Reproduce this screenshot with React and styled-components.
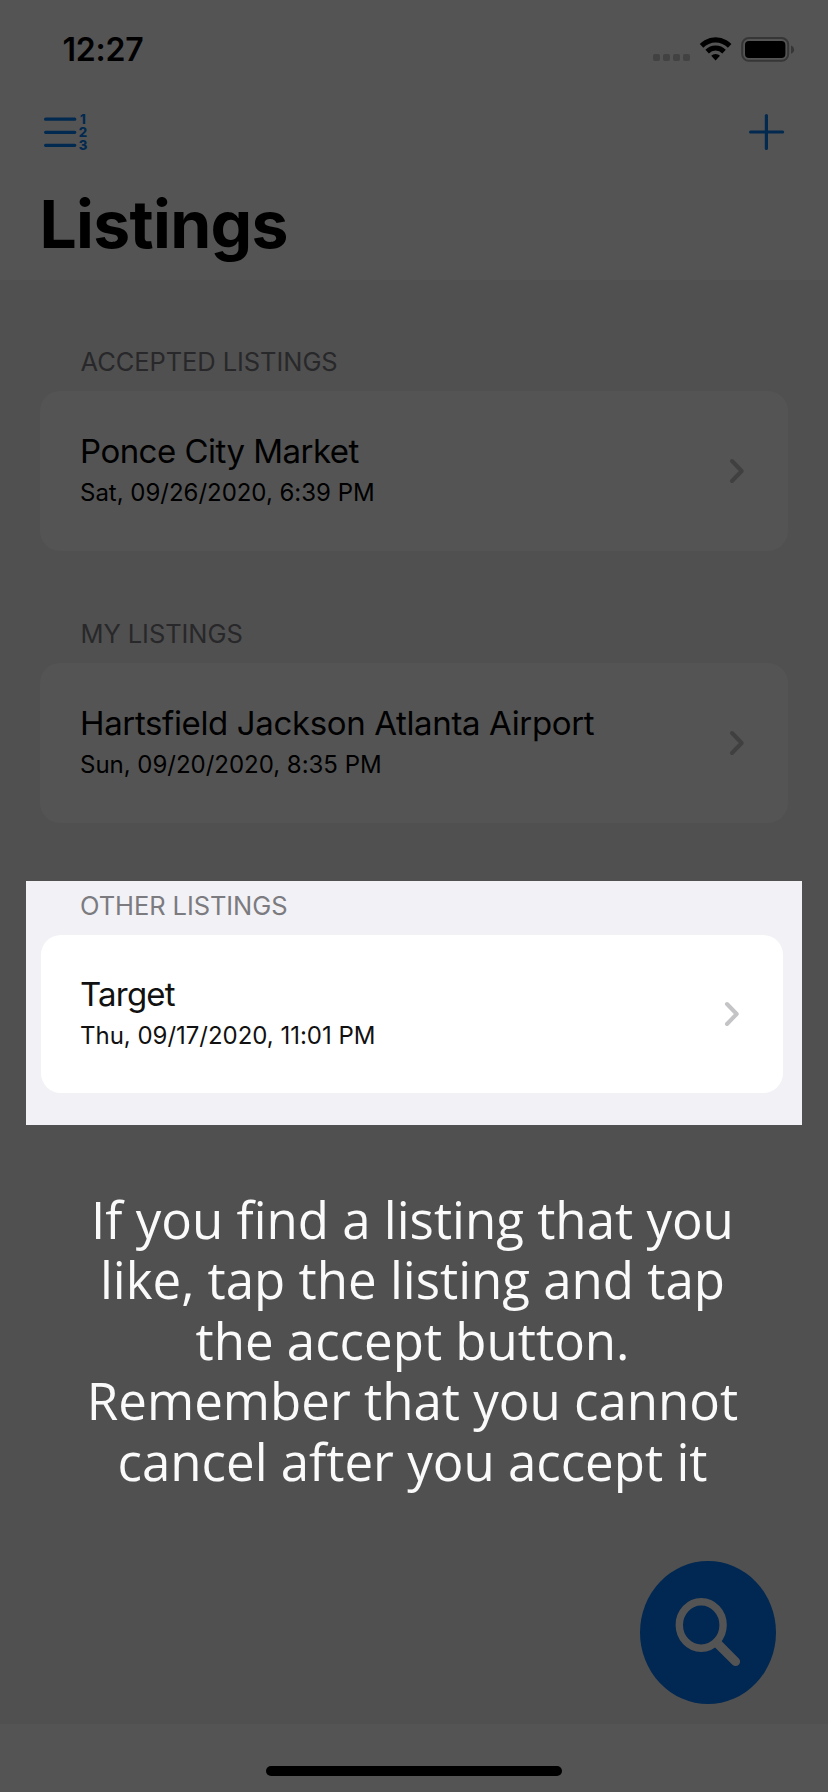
import React from "react";
import styled, { createGlobalStyle, css } from "styled-components";

const c = {
  surface: "#545454",
  canvas: "#505050",
  link: "#02294f",
  fab: "#002852",
  label: "#28282a",
};

const GlobalStyle = createGlobalStyle`
  * { box-sizing: border-box; }
  body { margin: 0; background: ${c.canvas}; }
`;

const Screen = styled.div`
  position: relative;
  display: flex;
  flex-direction: column;
  width: 828px;
  height: 1792px;
  overflow: hidden;
  background: ${c.canvas};
  color: #000;
  font-family: Inter, "Liberation Sans", sans-serif;
`;

const Header = styled.header`
  display: flex;
  flex-direction: column;
  flex: none;
  height: 280px;
  background: ${c.surface};
`;

const StatusBar = styled.div`
  display: flex;
  justify-content: space-between;
  align-items: flex-start;
  height: 96px;
  padding: 30px 33px 0 62.5px;
`;

const Clock = styled.span`
  font-size: 32px;
  font-weight: 600;
  line-height: 40px;
  letter-spacing: -0.2px;
`;

const StatusIcons = styled.svg`
  display: block;
  margin-top: 6px;
`;

const Toolbar = styled.div`
  display: flex;
  justify-content: space-between;
  align-items: center;
  height: 72px;
  padding: 0 43px;
`;

const ToolButton = styled.button`
  display: flex;
  padding: 0;
  border: 0;
  background: none;
  color: ${c.link};
`;

const Title = styled.h1`
  margin: 16px 0 0 39.5px;
  font-size: 66px;
  font-weight: 700;
  line-height: 80px;
  letter-spacing: -0.7px;
`;

const Content = styled.main`
  display: flex;
  flex-direction: column;
  flex: 1;
  padding-top: 66px;
`;

const Section = styled.section`
  display: flex;
  flex-direction: column;
  gap: 13px;
  margin-bottom: 67px;
  padding: 0 40px;

  ${(p) =>
    p.$highlighted &&
    css`
      height: 244px;
      margin: -9px 26px 0;
      padding: 9px 19px 0 15px;
      background: #f2f1f6;
    `}
`;

const SectionLabel = styled.h2`
  margin: 0;
  padding-left: ${(p) => (p.$highlighted ? 39 : 40.5)}px;
  font-size: 25.5px;
  font-weight: 400;
  line-height: 32px;
  letter-spacing: -0.08px;
  color: ${(p) => (p.$highlighted ? "#7b7b80" : c.label)};
`;

const Card = styled.div`
  display: flex;
  justify-content: space-between;
  align-items: center;
  height: ${(p) => (p.$highlighted ? 158 : 160)}px;
  padding: 0 43px 0 ${(p) => (p.$highlighted ? 39 : 40)}px;
  border-radius: 20px;
  background: ${(p) => (p.$highlighted ? "#fff" : c.surface)};
  color: ${(p) => (p.$highlighted ? "#111" : "#000")};
`;

const CardText = styled.div`
  display: flex;
  flex-direction: column;
  gap: 6px;
  margin-bottom: 2px;
`;

const Place = styled.span`
  font-size: 33px;
  line-height: 40px;
  letter-spacing: ${(p) => p.$tracking}px;
`;

const When = styled.span`
  font-size: 24px;
  line-height: 32px;
  letter-spacing: -0.02px;
`;

const Chevron = styled.svg`
  display: block;
  color: ${(p) => (p.$highlighted ? "#c4c4c6" : "#404040")};
`;

const Message = styled.p`
  display: flex;
  flex-direction: column;
  align-items: center;
  margin: 64px 3px 0 0;
  font-family: "Open Sans", "Noto Sans", sans-serif;
  font-size: 51px;
  line-height: 60.4px;
  color: #fafafa;
`;

const MessageLine = styled.span`
  white-space: nowrap;
`;

const SearchButton = styled.button`
  position: absolute;
  right: 52px;
  bottom: 88px;
  width: 136px;
  height: 143px;
  padding: 0;
  border: 0;
  border-radius: 50%;
  background: ${c.fab};
  color: ${c.surface};
`;

const Footer = styled.footer`
  display: flex;
  justify-content: center;
  align-items: flex-end;
  flex: none;
  height: 68px;
  padding-bottom: 16px;
  background: ${c.surface};
`;

const HomeIndicator = styled.div`
  width: 296px;
  height: 10px;
  border-radius: 5px;
  background: #000;
`;

const SystemIcons = () => (
  <StatusIcons width="142" height="27" viewBox="0 0 142 27">
    <g fill="#424242">
      {[0, 10, 20, 30].map((x) => (
        <rect key={x} x={x} y="18" width="7" height="7" rx="2" />
      ))}
    </g>
    <path d="M51.6 4.3a21.2 21.2 0 0 1 22 0 22 22 0 0 1 4.8 3.8l-3.5 3.6a17.3 17.3 0 0 0-24.6 0L46.8 8.1a22 22 0 0 1 4.8-3.8z" />
    <path d="M52.4 13.8a14.4 14.4 0 0 1 20.4 0l-3.5 3.6a9.4 9.4 0 0 0-13.4 0z" />
    <path d="M58.2 19.8a6.2 6.2 0 0 1 8.8 0L62.6 24.4z" />
    <rect x="89.2" y="2" width="46" height="22.8" rx="6.6" fill="none" stroke="#363636" strokeWidth="2" />
    <rect x="92" y="5" width="40.4" height="17" rx="4" />
    <path d="M138 9.6c4.2 1.8 4.2 6.4 0 8.2z" fill="#363636" />
  </StatusIcons>
);

const NumberedListIcon = () => (
  <svg width="48" height="40" viewBox="0 0 48 40">
    <path d="M2.6 7.2h29.2M2.6 20.3h29.2M2.6 33.3h29.2" stroke="currentColor" strokeWidth="3.2" strokeLinecap="round" />
    <g fill="currentColor" fontFamily="Inter" fontWeight="800" fontSize="13.2" textAnchor="middle">
      <text x="40" y="11.7">1</text>
      <text x="40" y="24.8">2</text>
      <text x="40" y="37.8">3</text>
    </g>
  </svg>
);

const PlusIcon = () => (
  <svg width="36" height="36" viewBox="0 0 36 36">
    <path d="M17.4 1.6v32.8M1.6 18h32" stroke="currentColor" strokeWidth="3.2" strokeLinecap="round" />
  </svg>
);

const SearchIcon = () => (
  <svg width="136" height="143" viewBox="0 0 136 143" fill="none" stroke="currentColor">
    <ellipse cx="61.2" cy="64" rx="21.9" ry="23.2" strokeWidth="7.4" />
    <path d="M77.5 82.5L95.6 100.6" strokeWidth="9" strokeLinecap="round" />
  </svg>
);

const listings = [
  { label: "ACCEPTED LISTINGS", place: "Ponce City Market", when: "Sat, 09/26/2020, 6:39 PM", tracking: -0.52 },
  { label: "MY LISTINGS", place: "Hartsfield Jackson Atlanta Airport", when: "Sun, 09/20/2020, 8:35 PM", tracking: -0.36 },
  { label: "OTHER LISTINGS", place: "Target", when: "Thu, 09/17/2020, 11:01 PM", tracking: -0.8, highlighted: true },
];

const message = [
  "If you find a listing that you",
  "like, tap the listing and tap",
  "the accept button.",
  "Remember that you cannot",
  "cancel after you accept it",
];

function Listing({ label, place, when, tracking, highlighted }) {
  return (
    <Section $highlighted={highlighted}>
      <SectionLabel $highlighted={highlighted}>{label}</SectionLabel>
      <Card $highlighted={highlighted}>
        <CardText>
          <Place $tracking={tracking}>{place}</Place>
          <When>{when}</When>
        </CardText>
        <Chevron $highlighted={highlighted} width="16" height="26" viewBox="0 0 16 26">
          <path d="M3 3l9.7 10L3 23" fill="none" stroke="currentColor" strokeWidth="4" strokeLinecap="round" strokeLinejoin="round" />
        </Chevron>
      </Card>
    </Section>
  );
}

export default function App() {
  return (
    <>
      <GlobalStyle />
      <Screen>
        <Header>
          <StatusBar>
            <Clock>12:27</Clock>
            <SystemIcons />
          </StatusBar>
          <Toolbar>
            <ToolButton aria-label="Sort listings"><NumberedListIcon /></ToolButton>
            <ToolButton aria-label="Add listing"><PlusIcon /></ToolButton>
          </Toolbar>
          <Title>Listings</Title>
        </Header>
        <Content>
          {listings.map((item) => (
            <Listing key={item.label} {...item} />
          ))}
          <Message>
            {message.map((line) => (
              <MessageLine key={line}>{line}</MessageLine>
            ))}
          </Message>
        </Content>
        <SearchButton aria-label="Search"><SearchIcon /></SearchButton>
        <Footer>
          <HomeIndicator />
        </Footer>
      </Screen>
    </>
  );
}
